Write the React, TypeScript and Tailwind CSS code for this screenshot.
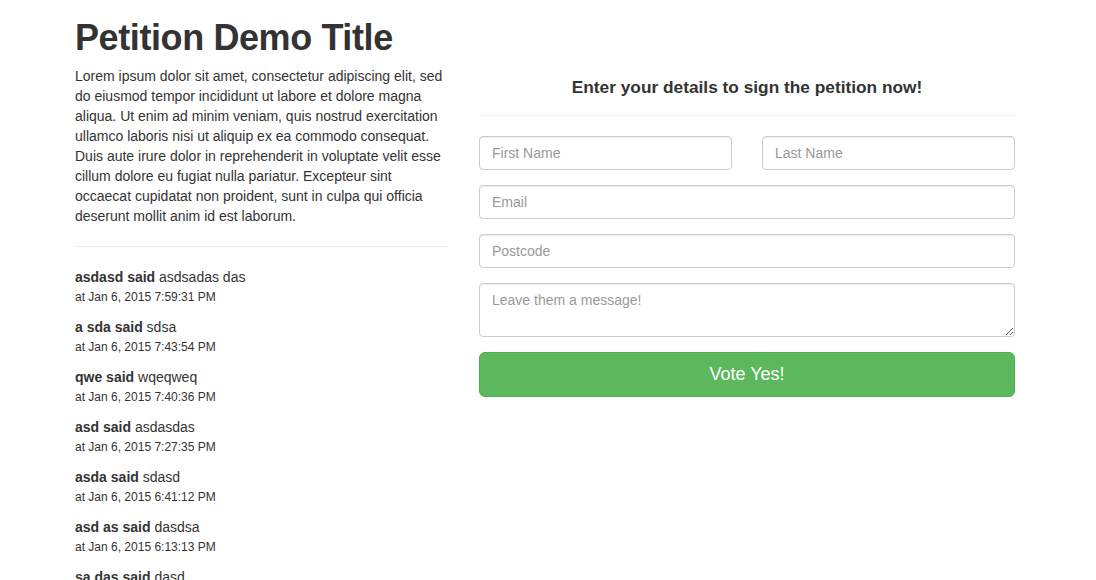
import React from 'react';

// ─── Sample signatures ────────────────────────────────────────────────────────
const COMMENTS = [
  { name: 'asdasd', message: 'asdsadas das', at: 'Jan 6, 2015 7:59:31 PM' },
  { name: 'a sda', message: 'sdsa', at: 'Jan 6, 2015 7:43:54 PM' },
  { name: 'qwe', message: 'wqeqweq', at: 'Jan 6, 2015 7:40:36 PM' },
  { name: 'asd', message: 'asdasdas', at: 'Jan 6, 2015 7:27:35 PM' },
  { name: 'asda', message: 'sdasd', at: 'Jan 6, 2015 6:41:12 PM' },
  { name: 'asd as', message: 'dasdsa', at: 'Jan 6, 2015 6:13:13 PM' },
  { name: 'sa das', message: 'dasd', at: 'Jan 6, 2015 6:02:48 PM' },
  { name: 'dsa', message: 'asd', at: 'Jan 6, 2015 5:58:20 PM' },
];

const inputCls =
  'w-full h-[34px] px-3 text-[14px] text-[#555] bg-white border border-[#ccc] rounded-[4px] shadow-[inset_0_1px_1px_rgba(0,0,0,0.075)] placeholder:text-[#999] outline-none';

export default function App() {
  return (
    <div className="min-h-screen bg-white text-[#333] font-['Liberation_Sans',Arial,sans-serif]">
      <div className="flex pl-[75px]">
        {/* Left: intro + signatures */}
        <div className="w-[373px] shrink-0">
          <h1 className="mt-[18px] mb-[8px] text-[36px] leading-[40px] font-bold text-[#333] tracking-[-0.4px]">
            Petition Demo Title
          </h1>
          <p className="text-[14px] leading-[20px]">
            Lorem ipsum dolor sit amet, consectetur adipiscing elit, sed do eiusmod tempor incididunt ut labore et
            dolore magna aliqua. Ut enim ad minim veniam, quis nostrud exercitation ullamco laboris nisi ut aliquip ex
            ea commodo consequat. Duis aute irure dolor in reprehenderit in voluptate velit esse cillum dolore eu fugiat
            nulla pariatur. Excepteur sint occaecat cupidatat non proident, sunt in culpa qui officia deserunt mollit
            anim id est laborum.
          </p>
          <hr className="mt-[20px] mb-[20px] border-0 border-t border-[#eee]" />
          <div className="flex flex-col">
            {COMMENTS.map((c, i) => (
              <div key={i} className="mb-[10px]">
                <p className="text-[14px] leading-[20px]">
                  <b className="font-bold">{c.name} said</b> {c.message}
                </p>
                <p className="text-[12px] leading-[20px]">at {c.at}</p>
              </div>
            ))}
          </div>
        </div>

        {/* Right: sign form */}
        <div className="w-[536px] shrink-0 ml-[31px]">
          <h3 className="mt-[75px] text-center text-[17.3px] leading-[24px] font-bold">
            Enter your details to sign the petition now!
          </h3>
          <hr className="mt-[16px] mb-[20px] border-0 border-t border-[#eee]" />
          <form className="flex flex-col gap-[15px]" onSubmit={e => e.preventDefault()}>
            <div className="flex gap-[30px]">
              <input className={inputCls} placeholder="First Name" />
              <input className={inputCls} placeholder="Last Name" />
            </div>
            <input className={inputCls} placeholder="Email" />
            <input className={inputCls} placeholder="Postcode" />
            <textarea
              className="w-full h-[54px] px-3 py-[6px] text-[14px] leading-[20px] text-[#555] bg-white border border-[#ccc] rounded-[4px] shadow-[inset_0_1px_1px_rgba(0,0,0,0.075)] placeholder:text-[#999] outline-none block"
              placeholder="Leave them a message!"
            />
            <button
              type="submit"
              className="w-full h-[45px] text-[18px] text-white bg-[#5cb85c] border border-[#4cae4c] rounded-[6px]"
            >
              Vote Yes!
            </button>
          </form>
        </div>
      </div>
    </div>
  );
}
